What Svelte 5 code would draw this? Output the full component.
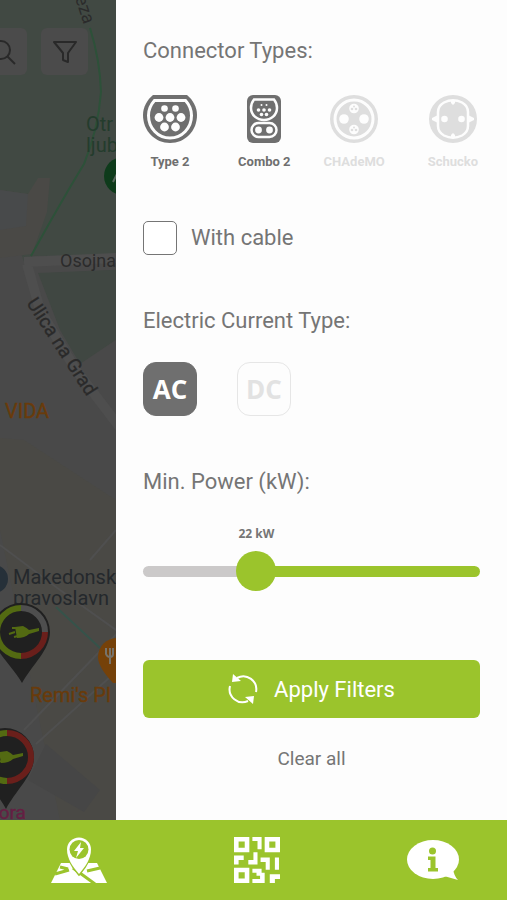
<script lang="ts">
  // Charging station filters: a drawer over the dimmed map,
  // with the tab bar at the bottom.

  const MAX_POWER = 70;

  let connectors = $state([
    { id: 'type2', name: 'Type 2', on: true },
    { id: 'combo2', name: 'Combo 2', on: true },
    { id: 'chademo', name: 'CHAdeMO', on: false },
    { id: 'schucko', name: 'Schucko', on: false },
  ]);

  let currents = $state([
    { name: 'AC', on: true },
    { name: 'DC', on: false },
  ]);

  let withCable = $state(false);
  let power = $state(22);
  let ratio = $derived(power / MAX_POWER);

  function clearAll() {
    connectors.forEach((c) => (c.on = false));
    currents.forEach((c) => (c.on = false));
    withCable = false;
    power = 0;
  }
</script>

{#snippet plug()}
  <path d="M-12 2 L-6 0 M-9 -4 L-4 -4 M-7 5 L-3 4" stroke="#536a12" stroke-width="2" fill="none" />
  <path d="M-6 -5 L2 -6 Q6 -4 8 -2 L18 -4 V-1 L8 2 Q4 6 -4 6 Z" fill="#536a12" />
{/snippet}

<div class="screen">
  <div class="stage">
    <div class="map">
      <svg class="tiles" width="160" height="820" viewBox="0 0 160 820" aria-hidden="true">
        <rect width="160" height="820" fill="#494949" />
        <path d="M0 0H160V254L34 256 24 262 0 190Z" fill="#414943" />
        <path d="M0 190 28 194 38 178 50 178 47 212 32 254 0 258Z" fill="#4a4946" />
        <path d="M0 190 28 194 26 226 0 230Z" fill="#484a4b" />
        <path d="M38 273 160 268V310L80 364 60 330Z" fill="#404742" />
        <path d="M24 262 160 256M27 264 40 310 76 370 160 480" stroke="#4e4e4e" stroke-width="10" fill="none" />
        <path d="M0 438 24 440 116 500V820H60L0 530Z" fill="#4a4945" />
        <path d="M0 545 60 590 130 640M24 730 130 620M36 744 140 650M90 560 116 530" stroke="#4f4f4f" stroke-width="2" fill="none" />
        <path d="M46 744 100 790 84 812 28 780Z" fill="#464646" />
        <path d="M90 28Q100 60 101 92 98 130 84 164 62 200 31 256" stroke="#2d5139" stroke-width="2" fill="none" />
        <path d="M56 607 100 648" stroke="#35534a" stroke-width="2" fill="none" />

        <g font-family="Roboto, sans-serif" font-size="20">
          <text x="86" y="131" fill="#243c2d">Otr</text>
          <text x="86" y="152" fill="#243c2d">ljub</text>
          <text x="60" y="267" font-size="18" fill="#2b2b2b">Osojna</text>
          <text transform="translate(75 -2) rotate(72)" font-size="18" fill="#2b2b2b">eza</text>
          <text transform="translate(26 303) rotate(57)" font-size="19" fill="#2a2a2a" stroke="#2a2a2a" stroke-width="0.3">Ulica na Grad</text>
          <text x="5" y="418" fill="#693b0b" stroke="#693b0b" stroke-width="0.4">VIDA</text>
          <text x="13" y="584" fill="#24282c">Makedonsk</text>
          <text x="13" y="605" fill="#24282c">pravoslavn</text>
          <text x="30" y="702" fill="#693b0b" stroke="#693b0b" stroke-width="0.4">Remi's Pl</text>
          <text x="-12" y="819" font-size="19" fill="#651f43" stroke="#651f43" stroke-width="0.4">pora</text>
        </g>

        <circle cx="123" cy="176" r="19" fill="#0e3b1b" />
        <path d="M113 182 117 174 121 184" stroke="#5a685e" stroke-width="2" fill="none" />
        <circle cx="-6" cy="579" r="14" fill="#263039" />
        <path d="M117 638a19 19 0 0 0-19 19q0 10 15 26h12V640z" fill="#754109" />
        <path d="M106 648v6q1 3 4 3 3 0 3-3v-6M110 648v16" stroke="#77736b" stroke-width="2" fill="none" />

        <g transform="translate(21 632)">
          <path d="M1 51C-9 33-29 18-29 0A29 29 0 0 1 29 0C29 18 11 33 1 51Z" fill="#202020" />
          <g fill="none" stroke-width="6">
            <path d="M0 24A24 24 0 0 1 0-24" stroke="#536a12" />
            <path d="M0-24A24 24 0 0 1 24 0" stroke="#4e4e4e" />
            <path d="M24 0A24 24 0 0 1 0 24" stroke="#6a1f1b" />
          </g>
          {@render plug()}
        </g>
        <g transform="translate(5 757)">
          <path d="M1 52C-9 33-29 18-29 0A29 29 0 0 1 29 0C29 18 11 33 1 52Z" fill="#202020" />
          <g fill="none" stroke-width="6">
            <path d="M2 24A24 24 0 0 1 2-24" stroke="#536a12" />
            <path d="M2-24A24 24 0 0 1 2 24" stroke="#6a1f1b" />
          </g>
          {@render plug()}
        </g>
      </svg>

      <div class="tools">
        <button class="tool" type="button" aria-label="Search">
          <svg width="28" height="28" viewBox="0 0 28 28">
            <circle cx="11" cy="12" r="9" />
            <path d="M17 18 25 26" />
          </svg>
        </button>
        <button class="tool" type="button" aria-label="Filter">
          <svg width="28" height="28" viewBox="0 0 28 28">
            <path d="M3 4H25L17 15V24L12 22V15Z" stroke-linejoin="round" />
          </svg>
        </button>
      </div>
    </div>

    <main class="drawer">
      <section>
        <h2>Connector Types:</h2>
        <div class="connectors">
          {#each connectors as c (c.id)}
            <button
              class="connector"
              class:on={c.on}
              type="button"
              aria-pressed={c.on}
              onclick={() => (c.on = !c.on)}
            >
              <svg width="54" height="48" viewBox="0 0 54 48" aria-hidden="true">
                {#if c.id === 'type2'}
                  <path class="solid" d="M10 0H44C50 5 54 12 54 20 54 36 42 48 27 48S0 36 0 20C0 12 4 5 10 0Z" />
                  <path class="line" d="M11.5 5.5H42.5C46.5 10 48.5 15 48.5 20.5 48.5 33 39 43 27 43S5.5 33 5.5 20.5C5.5 15 7.5 10 11.5 5.5Z" stroke-width="3" />
                  <g class="hole">
                    <circle cx="21.5" cy="13.5" r="3.3" /><circle cx="32.5" cy="13.5" r="3.3" />
                    <circle cx="16" cy="22.5" r="4.4" /><circle cx="27" cy="22.5" r="4.4" /><circle cx="38" cy="22.5" r="4.4" />
                    <circle cx="21.5" cy="32" r="4.4" /><circle cx="32.5" cy="32" r="4.4" />
                  </g>
                {:else if c.id === 'combo2'}
                  <rect class="solid" x="10" width="34" height="48" rx="6" />
                  <path class="line" d="M17 4.5H37C39 7 40 10 40 13 40 20 34 25 27 25S14 20 14 13C14 10 15 7 17 4.5Z" stroke-width="2.5" />
                  <rect class="line" x="14.5" y="28" width="25" height="14" rx="7" stroke-width="2.5" />
                  <g class="hole">
                    <circle cx="24.5" cy="10" r="1" /><circle cx="29.5" cy="10" r="1" />
                    <circle cx="21.5" cy="15" r="1.8" /><circle cx="27" cy="15" r="1.8" /><circle cx="32.5" cy="15" r="1.8" />
                    <circle cx="24.5" cy="19.5" r="1.8" /><circle cx="29.5" cy="19.5" r="1.8" />
                    <circle cx="21.5" cy="35" r="3.4" /><circle cx="32.5" cy="35" r="3.4" />
                  </g>
                {:else if c.id === 'chademo'}
                  <circle class="solid" cx="27" cy="24" r="24" />
                  <circle class="line" cx="27" cy="24" r="19" stroke-width="3" />
                  <g class="hole">
                    <circle cx="17" cy="24" r="4.8" /><circle cx="37" cy="24" r="4.8" />
                    <circle cx="27" cy="13.5" r="4.8" /><circle cx="27" cy="34.5" r="4.8" />
                  </g>
                  <g class="solid">
                    <circle cx="25" cy="14" r="1.3" /><circle cx="29" cy="14" r="1.3" /><circle cx="27" cy="11.5" r="1" />
                    <circle cx="25" cy="35" r="1.3" /><circle cx="29" cy="35" r="1.3" /><circle cx="27" cy="32.5" r="1" />
                  </g>
                {:else}
                  <circle class="solid" cx="27" cy="24" r="24" />
                  <path class="line" d="M18 7.5Q27 3 36 7.5 42 11 42 17V31Q42 37 36 40.500 27 45 18 40.500 12 37 12 31V17Q12 11 18 7.500Z" stroke-width="2.5" />
                  <g class="hole">
                    <circle cx="18.5" cy="24" r="3.3" /><circle cx="35.5" cy="24" r="3.3" />
                    <path d="M25 5H29V8L27 10 25 8ZM25 43H29V40L27 38 25 40ZM12 20 6 23V25L12 28ZM42 20 48 23V25L42 28Z" />
                  </g>
                {/if}
              </svg>
              <span>{c.name}</span>
            </button>
          {/each}
        </div>
        <label class="cable">
          <input type="checkbox" bind:checked={withCable} />
          With cable
        </label>
      </section>

      <section>
        <h2>Electric Current Type:</h2>
        <div class="currents">
          {#each currents as c (c.name)}
            <button
              class="current"
              class:on={c.on}
              type="button"
              aria-pressed={c.on}
              onclick={() => (c.on = !c.on)}
            >{c.name}</button>
          {/each}
        </div>
      </section>

      <section>
        <h2><label for="power">Min. Power (kW):</label></h2>
        <div class="power" style="--ratio: {ratio}">
          <output for="power">{power} kW</output>
          <input id="power" type="range" min="0" max={MAX_POWER} bind:value={power} />
        </div>
      </section>

      <div class="actions">
        <button class="apply" type="button">
          <svg width="30" height="30" viewBox="0 0 30 30" aria-hidden="true">
            <path d="M9 4A13 13 0 0 1 28 18M2 12A13 13 0 0 0 20 27" fill="none" stroke="#fff" stroke-width="2" />
            <path d="M5 0 13 7 4 8ZM25 30 17 23 26 22Z" fill="#fff" />
          </svg>
          Apply Filters
        </button>
        <button class="clear" type="button" onclick={clearAll}>Clear all</button>
      </div>
    </main>
  </div>

  <nav class="tabs">
    <a href="#map" aria-label="Map">
      <svg width="56" height="46" viewBox="0 0 56 46" aria-hidden="true">
        <path d="M10 26H46L56 46H0Z" />
        <path class="cut" d="M4 37 18 33M9 30 17 32M22 31 44 47M36 34 49 31" />
        <path class="gap" d="M28 37C22 30 16 22 16 12.5A12 12 0 0 1 40 12.5C40 22 34 30 28 37Z" />
        <circle class="green" cx="28" cy="12.5" r="9.5" />
        <path d="M30 5 23 14H27L25 21 33 11H29Z" />
      </svg>
    </a>
    <a href="#scan" aria-label="Scan QR code">
      <svg width="46" height="46" viewBox="0 0 45 45" aria-hidden="true">
        <path fill-rule="evenodd" d="M0 0H15V15H0ZM4.5 4.5V10.5H10.5V4.5ZM30 0H45V15H30ZM34.5 4.5V10.5H40.5V4.5ZM0 30H15V45H0ZM4.5 34.5V40.5H10.5V34.5Z" />
        <path d="M18 0H27V12H23V4H18ZM19 15H23V27H14V22.5H19ZM0 18H9.5V22.5H4.5V27H0ZM26 20H35V32H31V24.5H26ZM40 20H44V32H40ZM18 31H27V35H30V45H18V41H25.5V38H22V35H18ZM35 36.5H45V41H40V45H35Z" />
      </svg>
    </a>
    <a href="#info" aria-label="Info">
      <svg width="52" height="40" viewBox="0 0 52 40" aria-hidden="true">
        <ellipse cx="26" cy="19.5" rx="26" ry="19.5" />
        <path d="M37 36 51 40Q47 36 46 29Z" />
        <circle class="green" cx="25.5" cy="11" r="3.5" />
        <path class="green" d="M21 16.5H28.5V28H31V31.5H21V28H23.5V20H21Z" />
      </svg>
    </a>
  </nav>
</div>

<style>
  :global(body) {
    margin: 0;
    background: #fdfdfd;
  }

  .screen {
    display: flex;
    flex-direction: column;
    min-height: 100vh;
    font-family: Roboto, 'Liberation Sans', sans-serif;
    color: #757575;
  }

  button {
    padding: 0;
    border: 0;
    background: none;
    font: inherit;
    color: inherit;
    cursor: pointer;
  }

  svg {
    display: block;
  }

  .stage {
    flex: 1;
    display: grid;
    grid-template-columns: 116px 1fr;
  }

  /* Dimmed map */
  .map {
    position: relative;
    overflow: hidden;
    background: #494949;
  }
  .tiles {
    position: absolute;
    top: 0;
    left: 0;
  }
  .tools {
    position: absolute;
    top: 28px;
    right: 28px;
    display: flex;
    gap: 14px;
  }
  .tool {
    display: grid;
    place-items: center;
    width: 47px;
    height: 47px;
    border-radius: 6px;
    background: #4b4b4b;
  }
  .tool svg {
    fill: none;
    stroke: #292929;
    stroke-width: 2;
  }

  /* Drawer */
  .drawer {
    display: flex;
    flex-direction: column;
    gap: 52px;
    padding: 37px 27px 40px;
    background: #fdfdfd;
  }
  h2 {
    margin: 0;
    font-size: 22px;
    font-weight: 400;
    line-height: 28px;
  }

  .connectors {
    display: grid;
    grid-template-columns: 94fr 86fr 102fr 54fr;
    justify-items: start;
    margin-top: 30px;
  }
  .connector {
    display: flex;
    flex-direction: column;
    align-items: center;
    gap: 11px;
    font-size: 13px;
    font-weight: 700;
    line-height: 16px;
    white-space: nowrap;
    color: #dedede;
  }
  .connector.on {
    color: #6f6f6f;
  }
  .connector .solid {
    fill: currentColor;
  }
  .connector .hole {
    fill: #fdfdfd;
  }
  .connector .line {
    fill: none;
    stroke: #fdfdfd;
  }

  .cable {
    display: flex;
    align-items: center;
    gap: 14px;
    margin-top: 51px;
    font-size: 22px;
    line-height: 28px;
  }
  .cable input {
    appearance: none;
    width: 34px;
    height: 34px;
    margin: 0;
    border: 1px solid #757575;
    border-radius: 5px;
    background: #fff;
  }
  .cable input:checked {
    background: #9bc42c;
  }

  .currents {
    display: flex;
    gap: 40px;
    margin-top: 27px;
  }
  .current {
    width: 54px;
    height: 54px;
    border: 1px solid #e6e6e6;
    border-radius: 13px;
    font-family: 'Open Sans', sans-serif;
    font-size: 26px;
    font-weight: 700;
    color: #e2e2e2;
  }
  .current.on {
    border-color: #6f6f6f;
    background: #6f6f6f;
    color: #fff;
  }

  .power {
    display: flex;
    flex-direction: column;
    gap: 9px;
    margin-top: 30px;
  }
  .power output {
    align-self: flex-start;
    margin-left: calc(20px + (100% - 40px) * var(--ratio));
    transform: translateX(-50%);
    font-family: 'Open Sans', sans-serif;
    font-size: 12px;
    font-weight: 700;
    line-height: 16px;
  }
  .power input {
    appearance: none;
    width: 100%;
    height: 40px;
    margin: 0;
    background: none;
  }
  .power input::-webkit-slider-runnable-track {
    height: 11px;
    border-radius: 6px;
    background: linear-gradient(
      to right,
      #cbc9c9 calc(20px + (100% - 40px) * var(--ratio)),
      #9bc42c 0
    );
  }
  .power input::-webkit-slider-thumb {
    appearance: none;
    width: 40px;
    height: 40px;
    margin-top: -15px;
    border-radius: 50%;
    background: #9bc42c;
  }

  .actions {
    display: flex;
    flex-direction: column;
    align-items: center;
    gap: 27px;
    margin-top: 17px;
  }
  .apply {
    display: flex;
    align-items: center;
    justify-content: center;
    gap: 16px;
    width: 100%;
    height: 58px;
    border-radius: 6px;
    background: #9bc42c;
    font-size: 22px;
    color: #fff;
  }
  .clear {
    font-size: 19px;
    line-height: 28px;
  }

  /* Tab bar */
  .tabs {
    display: flex;
    align-items: center;
    justify-content: space-between;
    height: 80px;
    padding: 0 48px 0 51px;
    background: #9bc42c;
  }
  .tabs svg {
    fill: #fff;
  }
  .tabs .green {
    fill: #9bc42c;
  }
  .tabs .cut {
    fill: none;
    stroke: #9bc42c;
    stroke-width: 3;
  }
  .tabs .gap {
    stroke: #9bc42c;
    stroke-width: 3;
    paint-order: stroke;
  }
</style>
